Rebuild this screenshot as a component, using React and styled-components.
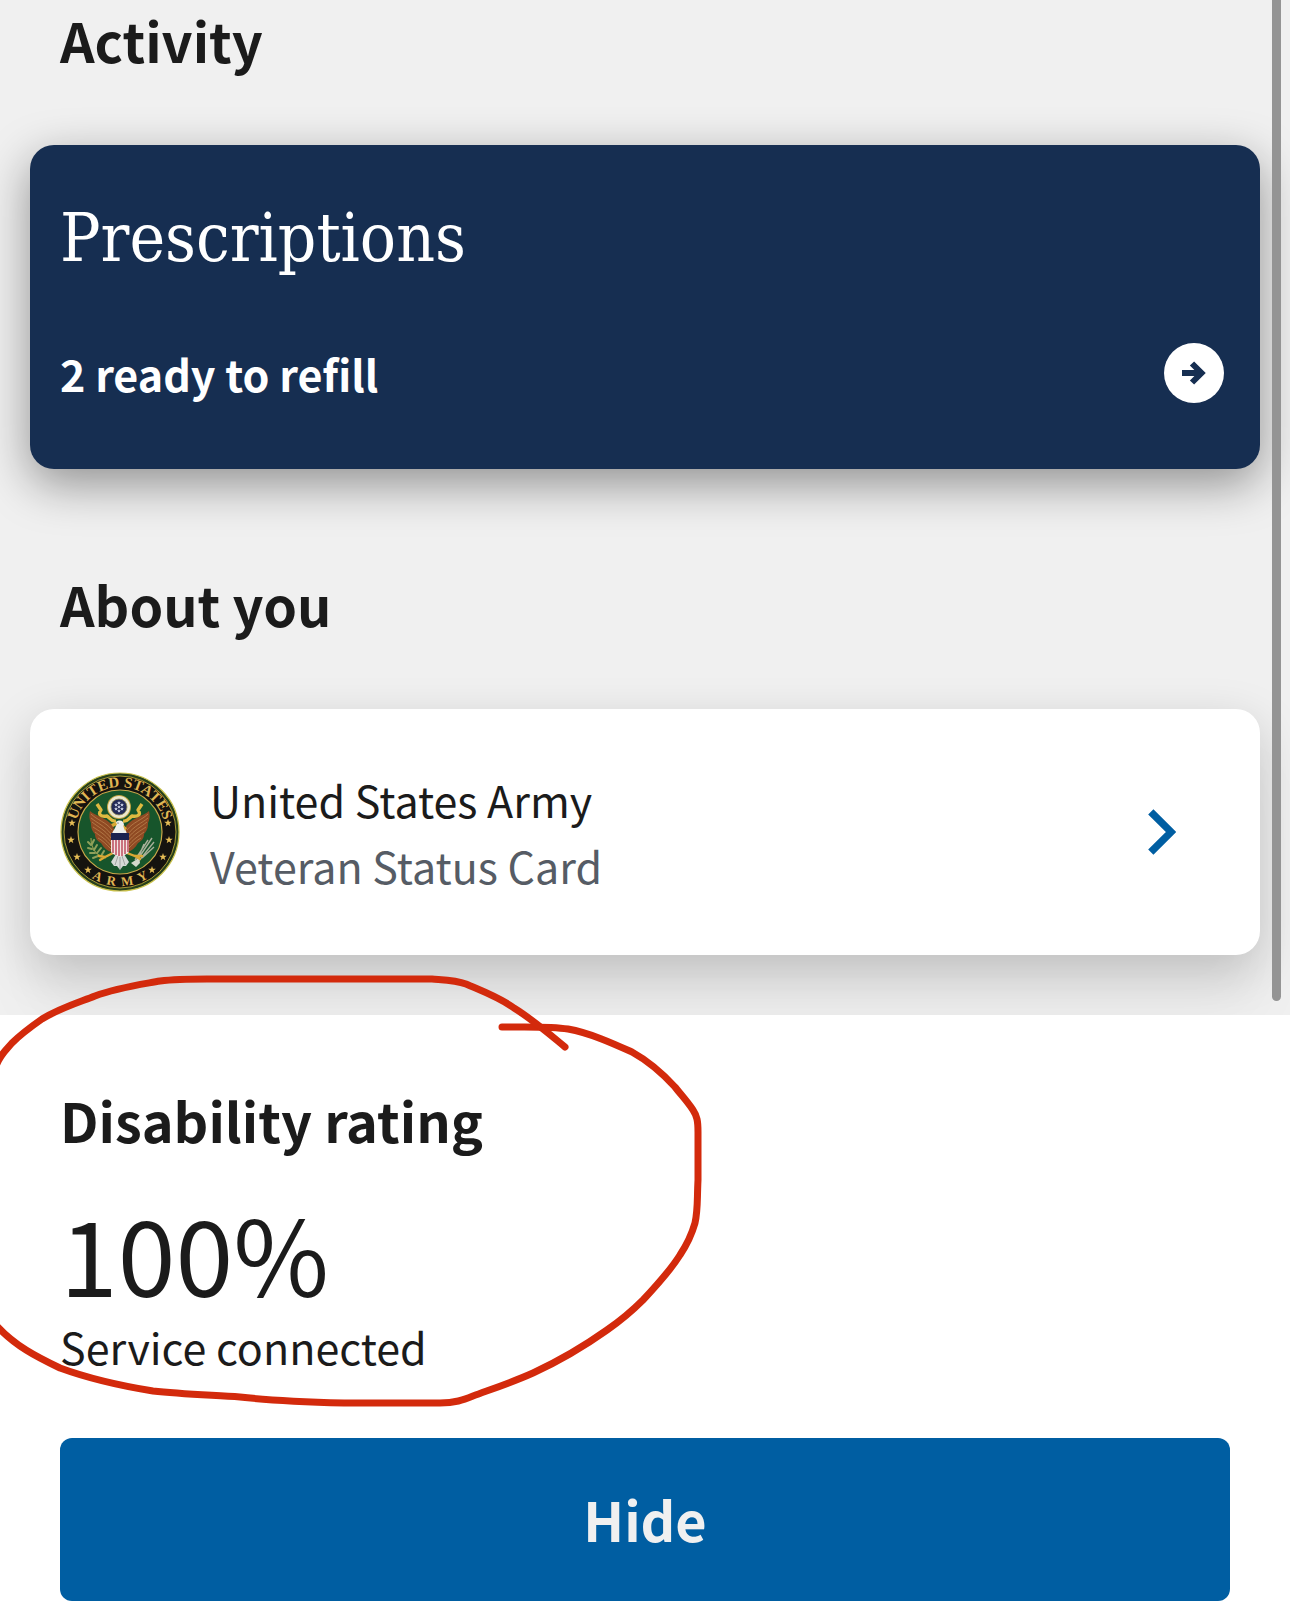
import React, { useState } from "react";
import styled, { createGlobalStyle, css } from "styled-components";

const sans = `"Noto Sans CJK JP", "Noto Sans", sans-serif`;
const slab = `"DejaVu Serif Condensed", "DejaVu Serif", serif`;

const SEAL_STARS = [
	[12, 51], [11, 68], [17, 85], [28, 98],
	[92, 98], [103, 85], [109, 68], [108, 51],
];

const DISC_STARS = [
	[59, 31], [56, 33], [62, 33], [59, 35], [56, 37], [62, 37], [59, 39],
];

const starPoints = (cx, cy, r) =>
	Array.from({ length: 10 }, (_, i) => {
		const radius = i % 2 ? r * 0.4 : r;
		const a = (Math.PI / 5) * i - Math.PI / 2;
		return `${(cx + radius * Math.cos(a)).toFixed(2)},${(cy + radius * Math.sin(a)).toFixed(2)}`;
	}).join(" ");

function Wing() {
	return (
		<g>
			<path
				d="M30 39 C34 43 47 46 53 54 L55 61 L52 80 C47 79 44 76 41 71 C36 68 35 65 35 62 C31 58 31 54 31 51 C29 47 29 43 30 39 Z"
				fill="#8f4a23"
			/>
			<path
				d="M31 42 C37 48 46 50 52 58 M31 46 C37 51 45 54 51 62 M32 50 C38 55 45 58 51 66 M33 55 C39 59 45 62 51 70 M35 60 C40 64 46 67 51 74 M38 66 C42 68 46 72 51 77"
				fill="none"
				stroke="#c08a55"
				strokeWidth="0.7"
			/>
		</g>
	);
}

function ArmySeal() {
	return (
		<Seal viewBox="0 0 120 120" role="img" aria-label="United States Army seal">
			<defs>
				<path id="seal-top" d="M15 60 A45 45 0 0 1 105 60" />
				<path id="seal-bottom" d="M6 60 A54 54 0 0 0 114 60" />
			</defs>
			<circle cx="60" cy="60" r="59" fill="#27401c" stroke="#c9c04a" strokeWidth="1.2" />
			<circle cx="60" cy="60" r="56" fill="#15130f" stroke="#b5a53a" strokeWidth="0.9" />
			<circle cx="60" cy="60" r="42" fill="#17552b" stroke="#c9a94a" strokeWidth="1.2" />
			<SealText fontSize="15">
				<textPath href="#seal-top" startOffset="50%" textAnchor="middle">UNITED STATES</textPath>
			</SealText>
			<SealText fontSize="13">
				<textPath href="#seal-bottom" startOffset="50%" textAnchor="middle">{"A\u00a0\u00a0R\u00a0\u00a0M\u00a0\u00a0Y"}</textPath>
			</SealText>
			{SEAL_STARS.map(([x, y]) => (
				<polygon key={`${x}-${y}`} points={starPoints(x, y, 4)} fill="#e6bd55" />
			))}

			{/* olive branch */}
			<path d="M31 66 C31 76 36 84 46 86" fill="none" stroke="#8f9a4b" strokeWidth="1.2" />
			<path
				d="M31 73 L28 70 M32 72 L34 68 M32 77 L28 76 M34 78 L37 73 M35 81 L30 81 M37 81 L41 76 M38 84 L33 86 M41 84 L44 79"
				stroke="#8fa05a"
				strokeWidth="2"
				strokeLinecap="round"
			/>
			{/* arrows */}
			<path
				d="M76 90 L92 66 M75 88 L88 68 M78 90 L94 70 M79 84 L84 72 M82 86 L94 75"
				stroke="#a9b09a"
				strokeWidth="1.4"
			/>
			<path d="M71 91 L79 86 L80 91 L76 95 Z" fill="#d5d8cc" />

			<Wing />
			<g transform="translate(119 0) scale(-1 1)">
				<Wing />
			</g>

			{/* talons */}
			<path d="M53 81 L45 85 L39 84 M45 85 L40 88 M67 81 L75 84 L82 84 M75 84 L80 87" fill="none" stroke="#d9a834" strokeWidth="2.4" strokeLinecap="round" />
			{/* tail */}
			<path d="M56 82 L64 82 L69 90 L66 94 L63 94 L60 98 L57 94 L54 94 L51 90 Z" fill="#d6d9d6" />
			<path d="M58 84 L55 93 M60 84 L60 97 M62 84 L65 93" stroke="#878d88" strokeWidth="0.7" />
			{/* ribbon */}
			<path
				d="M37 32 L41 38 C37 43 42 45 47 44 C50 46 51 50 56 49 M82 32 L78 38 C82 43 77 45 72 44 C69 46 68 50 63 49"
				fill="none"
				stroke="#dfba40"
				strokeWidth="3.4"
				strokeLinejoin="round"
			/>
			{/* head and neck */}
			<path d="M56 50 C60 47 64 49 64 53 L67 62 L52 62 C53 58 56 56 56 53 L53 52 Z" fill="#eef0ec" />
			<path d="M56 50 L51 52 L53 55 L57 53 Z M63 53 L67 56 L65 59 Z" fill="#d9a834" />
			<circle cx="58" cy="51" r="0.6" fill="#222" />
			{/* shield */}
			<path d="M51 68 H69 V79 C69 82 64 83 60 85 C56 83 51 82 51 79 Z" fill="#f2e6e2" />
			<path d="M53 68 V81 M56 68 V83 M59 68 V84 M62 68 V84 M65 68 V82 M68 68 V80" stroke="#b4364a" strokeWidth="1.3" />
			<path d="M51 61 H69 V68 H51 Z" fill="#1b2350" />
			{/* constellation */}
			<circle cx="59" cy="35" r="12" fill="#c3a443" />
			<circle cx="59" cy="35" r="11" fill="#ece8ce" />
			<circle cx="59" cy="35" r="8" fill="#232a56" stroke="#8d8657" strokeWidth="0.8" />
			{DISC_STARS.map(([x, y]) => (
				<polygon key={`${x}-${y}`} points={starPoints(x, y, 2)} fill="#d8def0" />
			))}
		</Seal>
	);
}

function Scribble() {
	return (
		<ScribbleSvg viewBox="0 0 720 1611" aria-hidden="true">
			<path
				d="M502 1027 C525 1027 550 1026 568 1029 C590 1033 612 1043 632 1052 C650 1062 664 1075 675 1087 C682 1096 687 1101 693 1110 C697 1116 698 1121 698 1132 L698 1180 C697 1200 698 1210 695 1223 C691 1237 686 1246 680 1255 C670 1271 658 1284 643 1300 C632 1311 620 1321 607 1330 C583 1347 559 1361 533 1373 C513 1382 492 1389 473 1396 C463 1400 455 1403 440 1403 L344 1403 C308 1402 275 1401 240 1397 C210 1395 180 1394 153 1391 C122 1386 90 1379 60 1368 C37 1357 15 1346 -4 1325"
			/>
			<path
				d="M-4 1066 C0 1055 5 1051 12 1043 C22 1033 32 1026 42 1019 C60 1008 77 1003 95 996 C116 988 138 985 160 981 C176 979 190 979 207 979 L432 979 C446 980 456 980 466 984 C482 991 499 997 514 1008 C532 1019 548 1033 565 1047"
			/>
		</ScribbleSvg>
	);
}

function App() {
	const [visible, setVisible] = useState(true);

	return (
		<Page>
			<GlobalStyle />
			<HomeSection>
				<Heading>Activity</Heading>
				<ActivityCard href="#prescriptions">
					<ActivityTitle>Prescriptions</ActivityTitle>
					<ActivityRow>
						<ActivityTxt>2 ready to refill</ActivityTxt>
						<ArrowIcon viewBox="0 0 60 60" aria-hidden="true">
							<circle cx="30" cy="30" r="30" fill="#ffffff" />
							<path d="M18 30 H37 M28 20.5 L37.5 30 L28 39.5" fill="none" stroke="#162e51" strokeWidth="6" />
						</ArrowIcon>
					</ActivityRow>
				</ActivityCard>

				<Heading $spaced>About you</Heading>
				<StatusCard href="#veteran-status">
					<ArmySeal />
					<StatusInfo>
						<StatusTxt>United States Army</StatusTxt>
						<StatusTxt $muted>Veteran Status Card</StatusTxt>
					</StatusInfo>
					<ChevronIcon viewBox="0 0 28 46" aria-hidden="true">
						<path d="M2.8 2.8 L23 23 L2.8 43.2" fill="none" stroke="#005ea2" strokeWidth="7.4" />
					</ChevronIcon>
				</StatusCard>
				<ScrollThumb />
			</HomeSection>

			<RatingSection>
				<Heading>Disability rating</Heading>
				<RatingValue>{visible ? "100%" : "--"}</RatingValue>
				<RatingTxt>Service connected</RatingTxt>
				<HideBtn type="button" onClick={() => setVisible(!visible)}>
					{visible ? "Hide" : "Show"}
				</HideBtn>
			</RatingSection>
			<Scribble />
		</Page>
	);
}

const GlobalStyle = createGlobalStyle`
  * {
    box-sizing: border-box;
  }
  body {
    margin: 0;
    background-color: #ffffff;
    color: #1b1b1b;
    font-family: ${sans};
  }
`;

const Page = styled.main`
  position: relative;
  overflow: hidden;
`;

const HomeSection = styled.section`
  position: relative;
  padding: 8px 30px 60px;
  overflow: hidden;
  background-color: #f0f0f0;
`;

const Heading = styled.h2`
  margin: 0;
  font-size: 54px;
  line-height: 64px;
  font-weight: 700;

  ${HomeSection} & {
    padding-left: 30px;
    margin-bottom: 73px;
  }

  ${(props) =>
    props.$spaced &&
    css`
      margin-top: 103px;
    `}
`;

const card = css`
  border-radius: 24px;
  text-decoration: none;
`;

const ActivityCard = styled.a`
  ${card}
  display: flex;
  flex-direction: column;
  gap: 65px;
  padding: 53px 36px 66px 30px;
  background-color: #162e51;
  color: #ffffff;
  box-shadow: 0 15px 48px rgba(0, 0, 0, 0.4);
`;

const ActivityTitle = styled.span`
  font-family: ${slab};
  font-size: 67px;
  line-height: 80px;
`;

const ActivityRow = styled.span`
  display: flex;
  align-items: center;
  justify-content: space-between;
`;

const ActivityTxt = styled.span`
  font-size: 43px;
  line-height: 60px;
  font-weight: 700;
`;

const ArrowIcon = styled.svg`
  width: 60px;
  height: 60px;
`;

const StatusCard = styled.a`
  ${card}
  display: flex;
  align-items: center;
  gap: 30px;
  padding: 57px 84px 57px 30px;
  background-color: #ffffff;
  color: #1b1b1b;
  box-shadow: 0 15px 48px rgba(0, 0, 0, 0.18), 0 60px 60px rgba(0, 0, 0, 0.04);
`;

const Seal = styled.svg`
  flex: none;
  width: 120px;
  height: 120px;
`;

const SealText = styled.text`
  font-family: "Liberation Serif", serif;
  font-weight: 700;
  fill: #e0b653;
`;

const StatusInfo = styled.span`
  flex: 1;
  display: flex;
  flex-direction: column;
`;

const StatusTxt = styled.span`
  font-size: 43px;
  line-height: 66px;
  color: ${(props) => (props.$muted ? "#565c65" : "#1b1b1b")};
`;

const ChevronIcon = styled.svg`
  flex: none;
  width: 28px;
  height: 46px;
`;

const ScrollThumb = styled.div`
  position: absolute;
  top: -9px;
  right: 9px;
  bottom: 14px;
  width: 9px;
  border-radius: 5px;
  background-color: #949494;
`;

const RatingSection = styled.section`
  display: flex;
  flex-direction: column;
  padding: 73px 60px 10px;
  background-color: #ffffff;
`;

const RatingValue = styled.p`
  margin: 50px 0 0;
  font-size: 104px;
  line-height: 100px;
`;

const RatingTxt = styled.p`
  margin: 14px 0 0;
  font-size: 43px;
  line-height: 60px;
`;

const HideBtn = styled.button`
  margin-top: 62px;
  padding: 49px 24px 50px;
  border: none;
  border-radius: 12px;
  background-color: #005ea2;
  color: #f0f0f0;
  font-family: ${sans};
  font-size: 54px;
  line-height: 64px;
  font-weight: 700;
  cursor: pointer;

  &:hover {
    background-color: #1a4480;
  }
`;

const ScribbleSvg = styled.svg`
  position: absolute;
  top: 0;
  left: 0;
  width: 720px;
  height: 1611px;
  pointer-events: none;

  path {
    fill: none;
    stroke: #d32a0c;
    stroke-width: 7;
    stroke-linecap: round;
    stroke-linejoin: round;
  }
`;

export default App;
